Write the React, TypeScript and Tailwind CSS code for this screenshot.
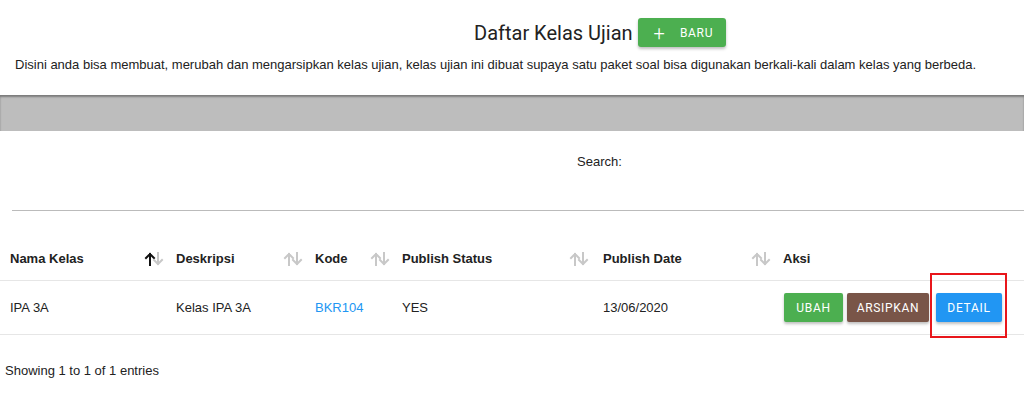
import React from 'react';

const SortIcon = ({ active }: { active?: boolean }) => (
  <svg width="20" height="16" viewBox="0 0 20 16" className="shrink-0">
    <g strokeWidth="2" fill="none" strokeLinecap="square">
      <path d="M6 14V3M2 7l4-4 4 4" stroke={active ? '#111' : '#c8c8c8'} />
      <path d="M14 2v11M10 9l4 4 4-4" stroke="#c8c8c8" />
    </g>
  </svg>
);

const columns = [
  { label: 'Nama Kelas', w: 'w-[170px]', active: true },
  { label: 'Deskripsi', w: 'w-[139px]' },
  { label: 'Kode', w: 'w-[87px]' },
  { label: 'Publish Status', w: 'w-[201px]' },
  { label: 'Publish Date', w: 'w-[180px]' },
];

export default function App() {
  return (
    <div className="w-[1024px] h-[406px] overflow-hidden bg-white text-[#222] font-['Liberation_Sans',Arial,sans-serif]">
      <div className="flex items-center pl-[474px] pt-[18px] h-[47px]">
        <h1 className="text-[20px] text-[#222] leading-none font-['Roboto','Liberation_Sans',sans-serif] mr-[5px]">
          Daftar Kelas Ujian
        </h1>
        <button className="flex items-center h-[29px] w-[88px] pl-[16px] rounded-[3px] bg-[#4caf50] text-white shadow-[0_2px_3px_rgba(0,0,0,0.25)] font-['Roboto',sans-serif]">
          <span className="text-[20px] leading-none font-light">+</span>
          <span className="ml-[15px] text-[12px] font-normal tracking-[0.7px]">BARU</span>
        </button>
      </div>
      <p className="pl-[15px] pt-[10px] text-[13px] leading-[16px] text-[#222]">
        Disini anda bisa membuat, merubah dan mengarsipkan kelas ujian, kelas ujian ini dibuat supaya satu paket soal bisa digunakan berkali-kali dalam kelas yang berbeda.
      </p>
      <div className="mt-[22px] h-[36px] bg-[#bdbdbd] shadow-[inset_0_2px_2px_rgba(0,0,0,0.35)]" />
      <div className="pl-[577px] pt-[23px] text-[13px] leading-[16px] text-[#222]">Search:</div>
      <div className="ml-[12px] mt-[40px] border-t-[1.5px] border-[#bbbbbb]" />
      <div className="mt-[26px] text-[13px]">
        <div className="flex items-center h-[44px] border-b border-[#e6e6e6] font-bold text-[#222]">
          {columns.map((c, i) => (
            <div key={c.label} className={`${c.w} flex items-center justify-between ${i === 0 ? 'pl-[10px]' : 'pl-[6px]'} pr-[6px] ${i === 3 ? 'pr-[8px]' : ''}`}>
              <span>{c.label}</span>
              <SortIcon active={c.active} />
            </div>
          ))}
          <div className="pl-[6px]">Aksi</div>
        </div>
        <div className="flex items-center h-[54px] border-b border-[#e6e6e6] text-[#222]">
          <div className="w-[170px] pl-[10px]">IPA 3A</div>
          <div className="w-[139px] pl-[6px]">Kelas IPA 3A</div>
          <div className="w-[87px] pl-[6px] text-[#2196f3]">BKR104</div>
          <div className="w-[201px] pl-[6px]">YES</div>
          <div className="w-[180px] pl-[6px]">13/06/2020</div>
          <div className="flex items-center pl-[7px] gap-[4px] font-['Roboto',sans-serif] text-[12px] font-normal tracking-[0.7px] text-white">
            <button className="h-[29px] w-[59px] rounded-[2px] bg-[#4caf50] shadow-[0_2px_3px_rgba(0,0,0,0.25)]">UBAH</button>
            <button className="h-[29px] w-[82px] rounded-[2px] bg-[#795548] shadow-[0_2px_3px_rgba(0,0,0,0.25)]">ARSIPKAN</button>
            <div className="relative ml-[3px]">
              <button className="h-[29px] w-[66px] rounded-[2px] bg-[#2196f3] shadow-[0_2px_3px_rgba(0,0,0,0.25)]">DETAIL</button>
              <div className="absolute left-[-6px] right-[-5px] top-[-20px] bottom-[-16px] border-2 border-[#e8161b] pointer-events-none" />
            </div>
          </div>
        </div>
      </div>
      <div className="pl-[5px] pt-[28px] text-[13px] leading-[16px] text-[#222]">Showing 1 to 1 of 1 entries</div>
    </div>
  );
}
